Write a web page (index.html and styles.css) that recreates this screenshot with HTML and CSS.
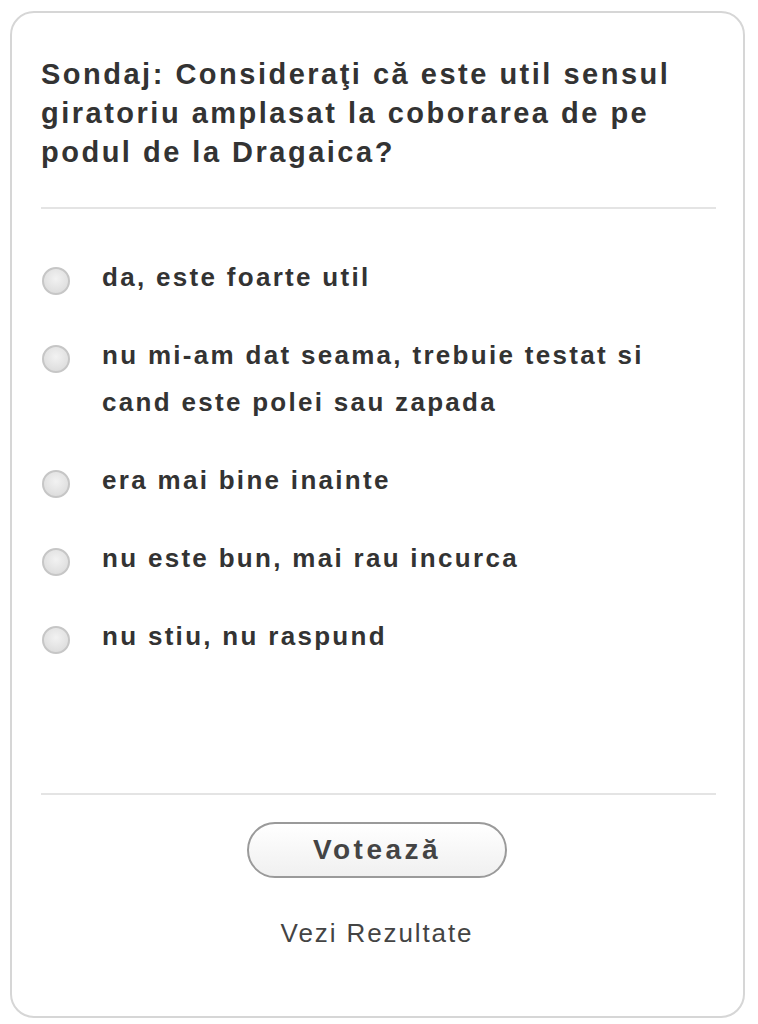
FILE: index.html
```html
<!DOCTYPE html>
<html lang="ro">
<head>
<meta charset="utf-8">
<title>Sondaj</title>
<link rel="stylesheet" href="styles.css">
</head>
<body>
<div class="card">
  <h2 class="question">Sondaj: Consideraţi că este util sensul giratoriu amplasat la coborarea de pe podul de la Dragaica?</h2>
  <div class="sep sep-top"></div>
  <ul class="options">
    <li class="option"><span class="radio"></span><span class="label">da, este foarte util</span></li>
    <li class="option"><span class="radio"></span><span class="label">nu mi-am dat seama, trebuie testat si cand este polei sau zapada</span></li>
    <li class="option"><span class="radio"></span><span class="label">era mai bine inainte</span></li>
    <li class="option"><span class="radio"></span><span class="label">nu este bun, mai rau incurca</span></li>
    <li class="option"><span class="radio"></span><span class="label">nu stiu, nu raspund</span></li>
  </ul>
  <div class="sep"></div>
  <div class="actions">
    <button class="vote">Votează</button>
    <a class="results">Vezi Rezultate</a>
  </div>
</div>
</body>
</html>
```

FILE: styles.css
```css
html, body {
  margin: 0;
  padding: 0;
  background: #fff;
}
body {
  font-family: "Liberation Sans", Arial, sans-serif;
  color: #333;
}
.card {
  box-sizing: border-box;
  margin: 11px 0 0 10px;
  width: 735px;
  height: 1007px;
  border: 2px solid #d6d6d6;
  border-radius: 24px;
  padding: 42px 27px 0 29px;
  display: flex;
  flex-direction: column;
}
.question {
  margin: 0;
  font-size: 29px;
  line-height: 39px;
  font-weight: bold;
  letter-spacing: 2.5px;
  color: #333;
}
.sep {
  height: 2px;
  background: #e4e4e4;
}
.sep-top {
  margin-top: 35px;
}
.options {
  list-style: none;
  margin: 0;
  padding: 45px 0 0 0;
  flex: 1;
  display: flex;
  flex-direction: column;
  gap: 31px;
}
.option {
  display: flex;
  align-items: flex-start;
  gap: 32px;
}
.radio {
  flex: none;
  width: 28px;
  height: 28px;
  margin-top: 13px;
  margin-left: 1px;
  border-radius: 50%;
  border: 2px solid #c6c6c6;
  box-sizing: border-box;
  background: radial-gradient(circle at 50% 40%, #f2f2f2 0%, #e2e2e2 60%, #d6d6d6 100%);
}
.label {
  font-size: 26px;
  line-height: 47px;
  font-weight: bold;
  letter-spacing: 2.3px;
  color: #333;
  padding-right: 40px;
}
.actions {
  display: flex;
  flex-direction: column;
  align-items: center;
  padding: 27px 0 68px;
}
.vote {
  width: 260px;
  height: 56px;
  margin-right: 3px;
  border-radius: 28px;
  border: 2px solid #9a9a9a;
  background: linear-gradient(#ffffff, #f0f0f0);
  font-family: "Liberation Sans", Arial, sans-serif;
  font-size: 28px;
  font-weight: bold;
  letter-spacing: 3.5px;
  color: #444;
  padding: 0;
}
.results {
  margin-top: 40px;
  margin-right: 3px;
  font-size: 26px;
  line-height: 30px;
  letter-spacing: 1.9px;
  color: #444;
}
```
